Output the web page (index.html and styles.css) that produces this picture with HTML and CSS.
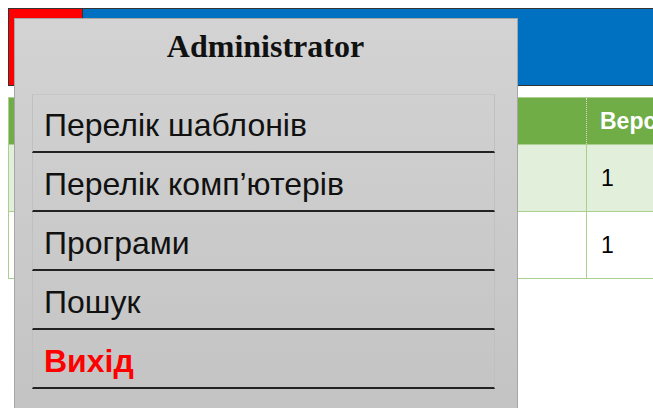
FILE: index.html
```html
<!DOCTYPE html>
<html lang="uk">
<head>
<meta charset="utf-8">
<title>Комп'ютери</title>
<link rel="stylesheet" href="styles.css">
</head>
<body>
<header class="topbar">
  <div class="brand"></div>
  <div class="band"></div>
</header>

<table class="grid">
  <thead>
    <tr><th class="col-name"></th><th class="col-ver">Версія</th></tr>
  </thead>
  <tbody>
    <tr class="odd"><td></td><td>1</td></tr>
    <tr><td></td><td>1</td></tr>
  </tbody>
</table>

<div class="user-menu">
  <div class="user-name">Administrator</div>
  <ul class="menu">
    <li class="menu-item">Перелік шаблонів</li>
    <li class="menu-item">Перелік комп’ютерів</li>
    <li class="menu-item">Програми</li>
    <li class="menu-item">Пошук</li>
    <li class="menu-item exit">Вихід</li>
  </ul>
</div>
</body>
</html>
```

FILE: styles.css
```css
html, body {
  margin: 0;
  padding: 0;
}

body {
  padding: 8px 0 0 8px;
  width: 900px;
  overflow: hidden;
  background: #fff;
  font-family: "Liberation Sans", Arial, sans-serif;
}

/* top bar: red logo block + blue band */
.topbar {
  display: flex;
  height: 76px;
  border: 1px solid #333;
  border-right: none;
}

.brand {
  width: 73px;
  background: #ff0000;
  border-right: 1px solid #333;
}

.band {
  flex: 1;
  background: #0070c0;
}

/* data table */
.grid {
  margin-top: 11px;
  border-collapse: collapse;
  width: 892px;
  border: 1px solid #a9d08e;
}

.grid th {
  background: #70ad47;
  color: #fff;
  font-weight: bold;
  font-size: 23px;
  height: 46px;
  text-align: left;
  padding: 0 13px;
}

.grid th.col-name {
  width: 551px;
  border-right: 1px dotted #d9d9d9;
}

.grid td {
  height: 65px;
  font-size: 23px;
  color: #000;
  padding: 1px 14px 0;
  border: 1px solid #a9d08e;
}

.grid tr.odd td {
  background: #e2efda;
}

/* user dropdown */
.user-menu {
  position: absolute;
  top: 18px;
  left: 14px;
  width: 463px;
  height: 420px;
  padding: 9px 22px 0 17px;
  border: 1px solid #a6a6a6;
  background: linear-gradient(#d3d3d3, #c2c2c2);
}

.user-name {
  font-family: "Liberation Serif", "Times New Roman", serif;
  font-weight: bold;
  font-size: 32px;
  line-height: 37px;
  text-align: center;
  color: #111;
  padding-left: 4px;
}

.menu {
  list-style: none;
  margin: 29px 0 0;
  padding: 0;
}

.menu-item {
  font-size: 32px;
  line-height: 37px;
  color: #111;
  padding: 12px 11px 7px;
  border: 1px solid #c0c0c0;
  border-top-color: #c6c6c6;
  border-bottom: 2px solid #222;
}

.menu-item + .menu-item {
  border-top: none;
  padding-top: 13px;
}

.menu-item.exit {
  color: #ff0000;
  font-weight: bold;
}
```
